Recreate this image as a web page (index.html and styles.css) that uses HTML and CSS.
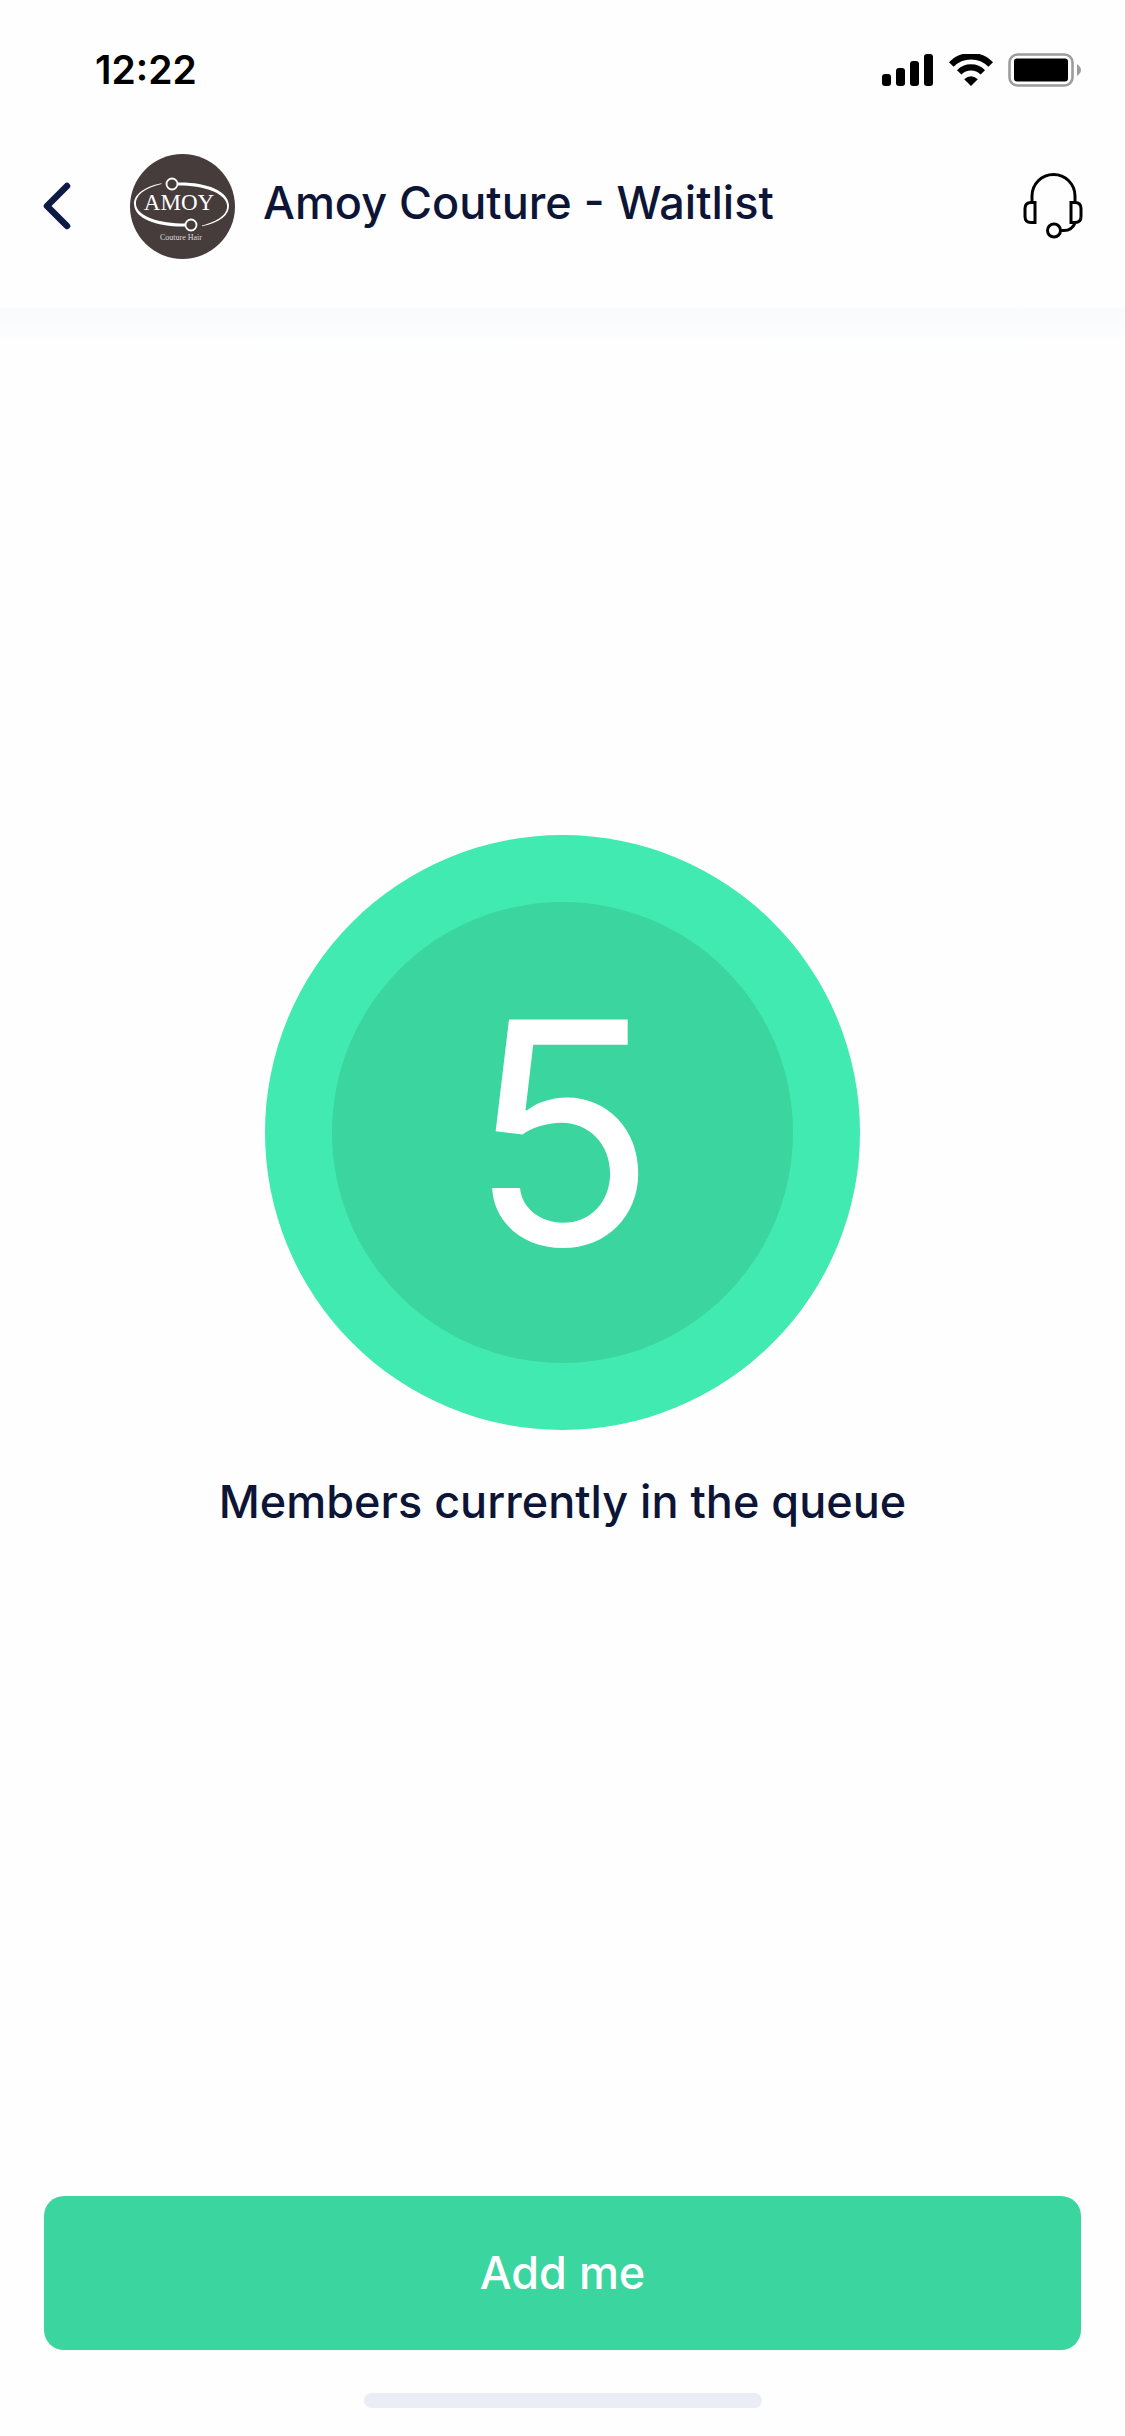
FILE: index.html
```html
<!DOCTYPE html>
<html lang="en">
<head>
<meta charset="utf-8">
<meta name="viewport" content="width=device-width, initial-scale=1">
<title>Amoy Couture - Waitlist</title>
<link rel="stylesheet" href="styles.css">
</head>
<body>
<div class="status-bar">
  <time class="clock">12:22</time>
  <div class="status-icons">
    <svg class="signal" width="52" height="32" viewBox="0 0 52 32" aria-hidden="true">
      <rect x="0" y="20" width="9" height="12" rx="3"/>
      <rect x="14" y="14" width="9" height="18" rx="3"/>
      <rect x="28" y="7" width="9" height="25" rx="3"/>
      <rect x="42" y="0" width="9" height="32" rx="3"/>
    </svg>
    <svg class="wifi" width="46" height="32" viewBox="0 0 46 32" aria-hidden="true">
      <path d="M3.300 10.500A27.500 27.500 0 0 1 42.700 10.500" fill="none" stroke="#000" stroke-width="6.500"/>
      <path d="M11.200 18.300A16.500 16.500 0 0 1 34.800 18.300" fill="none" stroke="#000" stroke-width="6.200"/>
      <path d="M16.200 25.200Q23 19.500 29.800 25.200L23 32Z"/>
    </svg>
    <svg class="battery" width="74" height="34" viewBox="0 0 74 34" aria-hidden="true">
      <rect x="1.500" y="1.500" width="63" height="31" rx="8" fill="none" stroke="#9c9c9c" stroke-width="2.600"/>
      <rect x="6" y="5.500" width="54" height="23" rx="3"/>
      <path d="M69 11Q77 17 69 23Z" fill="#9c9c9c"/>
    </svg>
  </div>
</div>
<header class="header">
  <a class="back" href="#" aria-label="Back">
    <svg width="28" height="48" viewBox="0 0 28 48" aria-hidden="true"><path d="M24 4L4 24L24 44" fill="none" stroke="#0c1a45" stroke-width="6.500" stroke-linecap="round" stroke-linejoin="round"/></svg>
  </a>
  <svg class="avatar" width="105" height="105" viewBox="0 0 105 105" role="img" aria-label="Amoy Couture Hair">
    <circle cx="52.500" cy="52.500" r="52.500" fill="#463c3b"/>
    <g fill="none" stroke="#fff">
      <circle cx="42" cy="30" r="5.500" stroke-width="1.800"/>
      <circle cx="61" cy="71" r="5.500" stroke-width="1.800"/>
    </g>
    <path fill="#fff" d="M31.500 29.200C13 33 3.500 41 4 50.500C5 65 27 73 55.500 72.500V69.500C29 69.500 7.500 62.500 6 50.500C5 42 14 34 31.500 30Z"/>
    <path fill="#fff" d="M72 72.200C90 68.500 99.500 61 99 51C98 36.500 76 28 48 28.500V31.500C74 31.500 95.500 39 97 51C98 60 88.500 67.500 72 71.400Z"/>
    <text class="logo-name" x="49" y="56" text-anchor="middle">AMOY</text>
    <text class="logo-tag" x="51" y="86" text-anchor="middle">Couture Hair</text>
  </svg>
  <h1 class="title">Amoy Couture - Waitlist</h1>
  <button class="support" type="button" aria-label="Support">
    <svg width="60" height="66" viewBox="0 0 60 66" aria-hidden="true">
      <g fill="none" stroke="#000" stroke-width="3">
        <path d="M9 29V23A21.500 21.500 0 0 1 52 23V29"/>
        <path d="M12 29.500V49.500H8Q2 49.500 2 43.500V35.500Q2 29.500 8 29.500Z"/>
        <path d="M48 29.500V49.500H52Q58 49.500 58 43.500V35.500Q58 29.500 52 29.500Z"/>
        <circle cx="31" cy="57.500" r="6.500"/>
        <path d="M37.500 57.500H41Q49 57.500 52 50"/>
      </g>
    </svg>
  </button>
</header>
<main class="queue">
  <div class="ring"><div class="count">5</div></div>
  <p class="caption">Members currently in the queue</p>
</main>
<footer class="footer">
  <button class="add" type="button">Add me</button>
  <div class="home-indicator"></div>
</footer>
</body>
</html>
```
FILE: styles.css
```css
* {
  box-sizing: border-box;
}

body {
  margin: 0;
  min-height: 100vh;
  display: flex;
  flex-direction: column;
  background: #fefefe;
  color: #0c1536;
  font-family: Inter, "Liberation Sans", sans-serif;
  font-size: 45px;
  line-height: 60px;
}

.status-bar {
  display: flex;
  justify-content: space-between;
  align-items: center;
  height: 140px;
  padding: 0 43px 0 95px;
  color: #000;
}

.clock {
  font-size: 39px;
  font-weight: 600;
}

.status-icons {
  display: flex;
  align-items: center;
  gap: 14px;
}

.header {
  display: flex;
  align-items: center;
  height: 168px;
  padding: 0 42px 36px 43px;
}

.back {
  display: flex;
  width: 87px;
}

.avatar {
  flex: none;
}

.logo-name {
  fill: #fff;
  font-family: "Liberation Serif", serif;
  font-size: 23px;
}

.logo-tag {
  fill: #ddd;
  font-family: "Liberation Serif", serif;
  font-size: 8px;
}

.title {
  flex: 1;
  margin: 0;
  padding: 0 0 6px 28px;
  font-size: 45px;
  font-weight: 500;
  white-space: nowrap;
}

.support {
  display: flex;
  padding: 0;
  border: 0;
  background: none;
}

.queue {
  flex: 1;
  display: flex;
  flex-direction: column;
  align-items: center;
  justify-content: center;
  gap: 42px;
  padding-bottom: 137px;
  background: linear-gradient(#f8fafb, #fefefe 36px);
}

.ring {
  display: flex;
  padding: 67px;
  border-radius: 50%;
  background: #40eab0;
}

.count {
  display: flex;
  align-items: center;
  justify-content: center;
  width: 461px;
  height: 461px;
  border-radius: 50%;
  background: #3bd5a0;
  color: #fff;
  font-size: 310px;
  line-height: 1;
}

.caption {
  margin: 0;
  font-weight: 500;
  text-align: center;
}

.footer {
  display: flex;
  flex-direction: column;
  align-items: center;
  gap: 43px;
  padding: 0 44px 28px;
}

.add {
  width: 100%;
  padding: 47px;
  border: 0;
  border-radius: 20px;
  background: #3bd5a0;
  color: #fff;
  font: inherit;
  font-weight: 500;
}

.home-indicator {
  width: 398px;
  height: 15px;
  border-radius: 8px;
  background: #eaecf6;
}
```
